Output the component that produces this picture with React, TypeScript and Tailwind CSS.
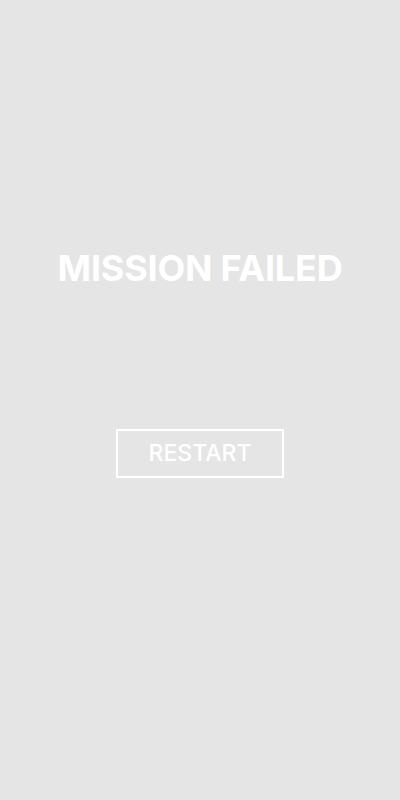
export default function App() {
  return (
    <div
      className="w-[400px] h-[800px] bg-[#e5e5e5] flex flex-col items-center"
      style={{ fontFamily: 'Inter, "Liberation Sans", sans-serif' }}
    >
      <h1 className="mt-[246px] h-[44px] leading-[44px] text-[36px] font-bold text-white tracking-[-0.2px]">
        MISSION FAILED
      </h1>
      <button className="mt-[139px] w-[168px] h-[49px] border-2 border-white text-white text-[23px] font-medium flex items-center justify-center">
        RESTART
      </button>
    </div>
  )
}
